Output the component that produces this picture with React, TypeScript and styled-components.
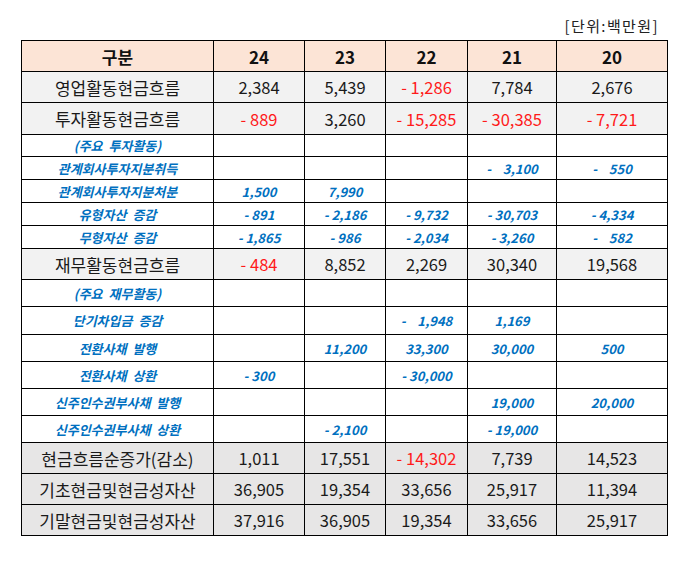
import React from "react";
import styled, { createGlobalStyle } from "styled-components";

const GlobalStyle = createGlobalStyle`
  body {
    margin: 0;
    background: #ffffff;
    font-family: "Noto Sans CJK KR", "Noto Sans", sans-serif;
    color: #1a1a1a;
  }
`;

const Page = styled.div`
  padding: 16px 0 0 21px;
  width: 646px;
`;

const Unit = styled.div`
  height: 20px;
  line-height: 20px;
  margin-bottom: 4px;
  padding-right: 8px;
  text-align: right;
  font-size: 15px;
  letter-spacing: 1.4px;
  color: #222;
`;

const Table = styled.table`
  border-collapse: collapse;
  table-layout: fixed;
  width: 646px;
`;

const HeadCell = styled.th`
  background: #fce4d6;
  border: 1px solid #000;
  font-size: 17px;
  font-weight: 700;
  text-align: center;
  padding: 0;
  color: #111;
`;

type Kind = "main" | "total" | "sub" | "sub2";

const Row = styled.tr<{ $h: number }>`
  height: ${(p) => p.$h}px;
`;

const isBig = (k: Kind) => k === "main" || k === "total";

const Cell = styled.td<{ $kind: Kind; $red?: boolean; $label?: boolean }>`
  border: 1px solid #000;
  padding: 0;
  text-align: center;
  white-space: pre;
  background: ${(p) =>
    p.$kind === "main" ? "#f2f2f2" : p.$kind === "total" ? "#e7e6e6" : "#ffffff"};
  font-size: ${(p) => (isBig(p.$kind) ? (p.$label ? "17px" : "16.5px") : "13px")};
  font-weight: ${(p) => (isBig(p.$kind) ? 400 : 700)};
  font-style: ${(p) => (isBig(p.$kind) ? "normal" : "italic")};
  color: ${(p) => (p.$red ? "#ff1a1a" : isBig(p.$kind) ? "#1a1a1a" : "#0070c0")};
`;

type Line = { label: string; kind: Kind; h: number; values: string[] };

const years = ["24", "23", "22", "21", "20"];
const widths = [192, 91, 81, 82, 89, 111];

const lines: Line[] = [
  { label: "영업활동현금흐름", kind: "main", h: 31, values: ["2,384", "5,439", "- 1,286", "7,784", "2,676"] },
  { label: "투자활동현금흐름", kind: "main", h: 32, values: ["- 889", "3,260", "- 15,285", "- 30,385", "- 7,721"] },
  { label: "(주요  투자활동)", kind: "sub", h: 22, values: ["", "", "", "", ""] },
  { label: "관계회사투자지분취득", kind: "sub", h: 23, values: ["", "", "", "-    3,100", "-    550"] },
  { label: "관계회사투자지분처분", kind: "sub", h: 23, values: ["1,500", "7,990", "", "", ""] },
  { label: "유형자산  증감", kind: "sub", h: 23, values: ["- 891", "- 2,186", "- 9,732", "- 30,703", "- 4,334"] },
  { label: "무형자산  증감", kind: "sub", h: 23, values: ["- 1,865", "- 986", "- 2,034", "- 3,260", "-    582"] },
  { label: "재무활동현금흐름", kind: "main", h: 31, values: ["- 484", "8,852", "2,269", "30,340", "19,568"] },
  { label: "(주요  재무활동)", kind: "sub2", h: 27, values: ["", "", "", "", ""] },
  { label: "단기차입금  증감", kind: "sub2", h: 28, values: ["", "", "-    1,948", "1,169", ""] },
  { label: "전환사채  발행", kind: "sub2", h: 27, values: ["", "11,200", "33,300", "30,000", "500"] },
  { label: "전환사채  상환", kind: "sub2", h: 27, values: ["- 300", "", "- 30,000", "", ""] },
  { label: "신주인수권부사채  발행", kind: "sub2", h: 27, values: ["", "", "", "19,000", "20,000"] },
  { label: "신주인수권부사채  상환", kind: "sub2", h: 27, values: ["", "- 2,100", "", "- 19,000", ""] },
  { label: "현금흐름순증가(감소)", kind: "total", h: 31, values: ["1,011", "17,551", "- 14,302", "7,739", "14,523"] },
  { label: "기초현금및현금성자산", kind: "total", h: 31, values: ["36,905", "19,354", "33,656", "25,917", "11,394"] },
  { label: "기말현금및현금성자산", kind: "total", h: 31, values: ["37,916", "36,905", "19,354", "33,656", "25,917"] },
];

export default function App() {
  return (
    <>
      <GlobalStyle />
      <Page>
        <Unit>[단위:백만원]</Unit>
        <Table>
          <colgroup>
            {widths.map((w, i) => (
              <col key={i} style={{ width: w }} />
            ))}
          </colgroup>
          <thead>
            <Row $h={31}>
              <HeadCell>구분</HeadCell>
              {years.map((y) => (
                <HeadCell key={y}>{y}</HeadCell>
              ))}
            </Row>
          </thead>
          <tbody>
            {lines.map((line) => (
              <Row key={line.label} $h={line.h}>
                <Cell $kind={line.kind} $label>
                  {line.label}
                </Cell>
                {line.values.map((v, i) => (
                  <Cell key={i} $kind={line.kind} $red={isBig(line.kind) && v.startsWith("-")}>
                    {v}
                  </Cell>
                ))}
              </Row>
            ))}
          </tbody>
        </Table>
      </Page>
    </>
  );
}
